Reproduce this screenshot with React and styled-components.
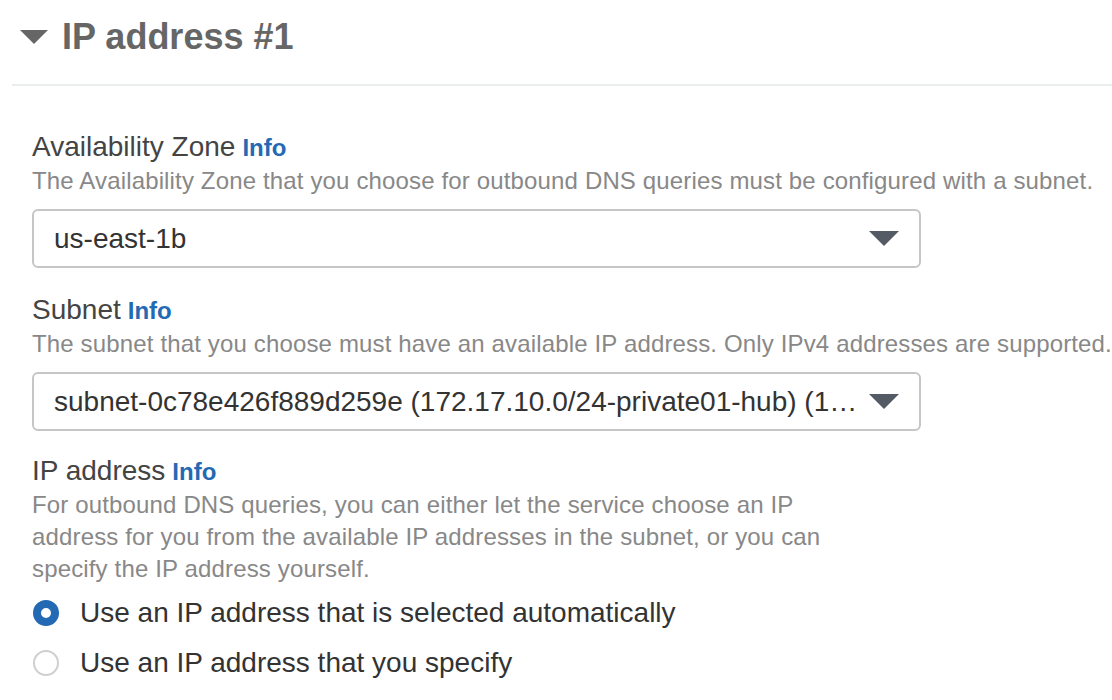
import React, { useState } from "react";
import styled, { createGlobalStyle } from "styled-components";

const GlobalStyle = createGlobalStyle`
  body {
    margin: 0;
    background: #fff;
    font-family: "Liberation Sans", Arial, Helvetica, sans-serif;
  }
`;

const Page = styled.div`
  width: 1112px;
  height: 700px;
  overflow: hidden;
`;

const Header = styled.div`
  display: flex;
  align-items: center;
  gap: 14px;
  height: 74px;
  padding-left: 20px;
`;

const Caret = styled.span`
  width: 0;
  height: 0;
  border-left: ${(p) => p.$w / 2}px solid transparent;
  border-right: ${(p) => p.$w / 2}px solid transparent;
  border-top: ${(p) => p.$h}px solid ${(p) => p.$color || "#666"};
  flex: none;
`;

const Title = styled.h2`
  margin: 0;
  font-size: 36px;
  font-weight: bold;
  color: #666;
  line-height: 40px;
`;

const Divider = styled.div`
  margin: 10px 0 0 12px;
  height: 2px;
  background: #eaeded;
`;

const Form = styled.div`
  padding: 44px 0 0 32px;
  display: flex;
  flex-direction: column;
`;

const Field = styled.div`
  display: flex;
  flex-direction: column;
  margin-top: ${(p) => p.$top || 0}px;
`;

const Label = styled.div`
  font-size: 28px;
  line-height: 34px;
  color: #444;
`;

const Info = styled.a`
  font-size: 24px;
  font-weight: bold;
  color: #2469b3;
  margin-left: 7px;
  text-decoration: none;
`;

const Desc = styled.div`
  font-size: 24px;
  line-height: 32px;
  letter-spacing: 0.15px;
  color: #888;
  max-width: ${(p) => p.$max || "none"};
`;

const Select = styled.div`
  margin-top: 12px;
  width: 889px;
  height: 59px;
  box-sizing: border-box;
  border: 2px solid #c6c6c6;
  border-radius: 6px;
  display: flex;
  align-items: center;
  gap: 10px;
  padding: 0 20px 0 20px;
  background: #fff;
`;

const SelectValue = styled.span`
  flex: 1;
  min-width: 0;
  font-size: 28px;
  color: #333;
  white-space: nowrap;
`;

const RadioGroup = styled.div`
  display: flex;
  flex-direction: column;
  margin-top: 3px;
`;

const RadioRow = styled.label`
  display: flex;
  align-items: center;
  gap: 21px;
  height: 50px;
  font-size: 28px;
  color: #333;
  cursor: pointer;
`;

const RadioDot = styled.span`
  width: 26px;
  height: 26px;
  box-sizing: border-box;
  border-radius: 50%;
  flex: none;
  background: #fff;
  border: ${(p) => (p.$on ? "8px solid #2469b3" : "2px solid #cfcfcf")};
  margin-left: 1px;
`;

export default function App() {
  const [mode, setMode] = useState("auto");

  return (
    <Page>
      <GlobalStyle />
      <Header>
        <Caret $w={28} $h={14} />
        <Title>IP address #1</Title>
      </Header>
      <Divider />
      <Form>
        <Field>
          <Label>
            Availability Zone<Info>Info</Info>
          </Label>
          <Desc>
            The Availability Zone that you choose for outbound DNS queries must be configured with a subnet.
          </Desc>
          <Select>
            <SelectValue>us-east-1b</SelectValue>
            <Caret $w={30} $h={15} $color="#545b64" />
          </Select>
        </Field>
        <Field $top={25}>
          <Label>
            Subnet<Info>Info</Info>
          </Label>
          <Desc>
            The subnet that you choose must have an available IP address. Only IPv4 addresses are supported.
          </Desc>
          <Select>
            <SelectValue>subnet-0c78e426f889d259e (172.17.10.0/24-private01-hub) (1…</SelectValue>
            <Caret $w={30} $h={15} $color="#545b64" />
          </Select>
        </Field>
        <Field $top={23}>
          <Label>
            IP address<Info>Info</Info>
          </Label>
          <Desc $max="800px">
            For outbound DNS queries, you can either let the service choose an IP address for you from
            the available IP addresses in the subnet, or you can specify the IP address yourself.
          </Desc>
          <RadioGroup>
            <RadioRow onClick={() => setMode("auto")}>
              <RadioDot $on={mode === "auto"} />
              Use an IP address that is selected automatically
            </RadioRow>
            <RadioRow onClick={() => setMode("manual")}>
              <RadioDot $on={mode === "manual"} />
              Use an IP address that you specify
            </RadioRow>
          </RadioGroup>
        </Field>
      </Form>
    </Page>
  );
}
